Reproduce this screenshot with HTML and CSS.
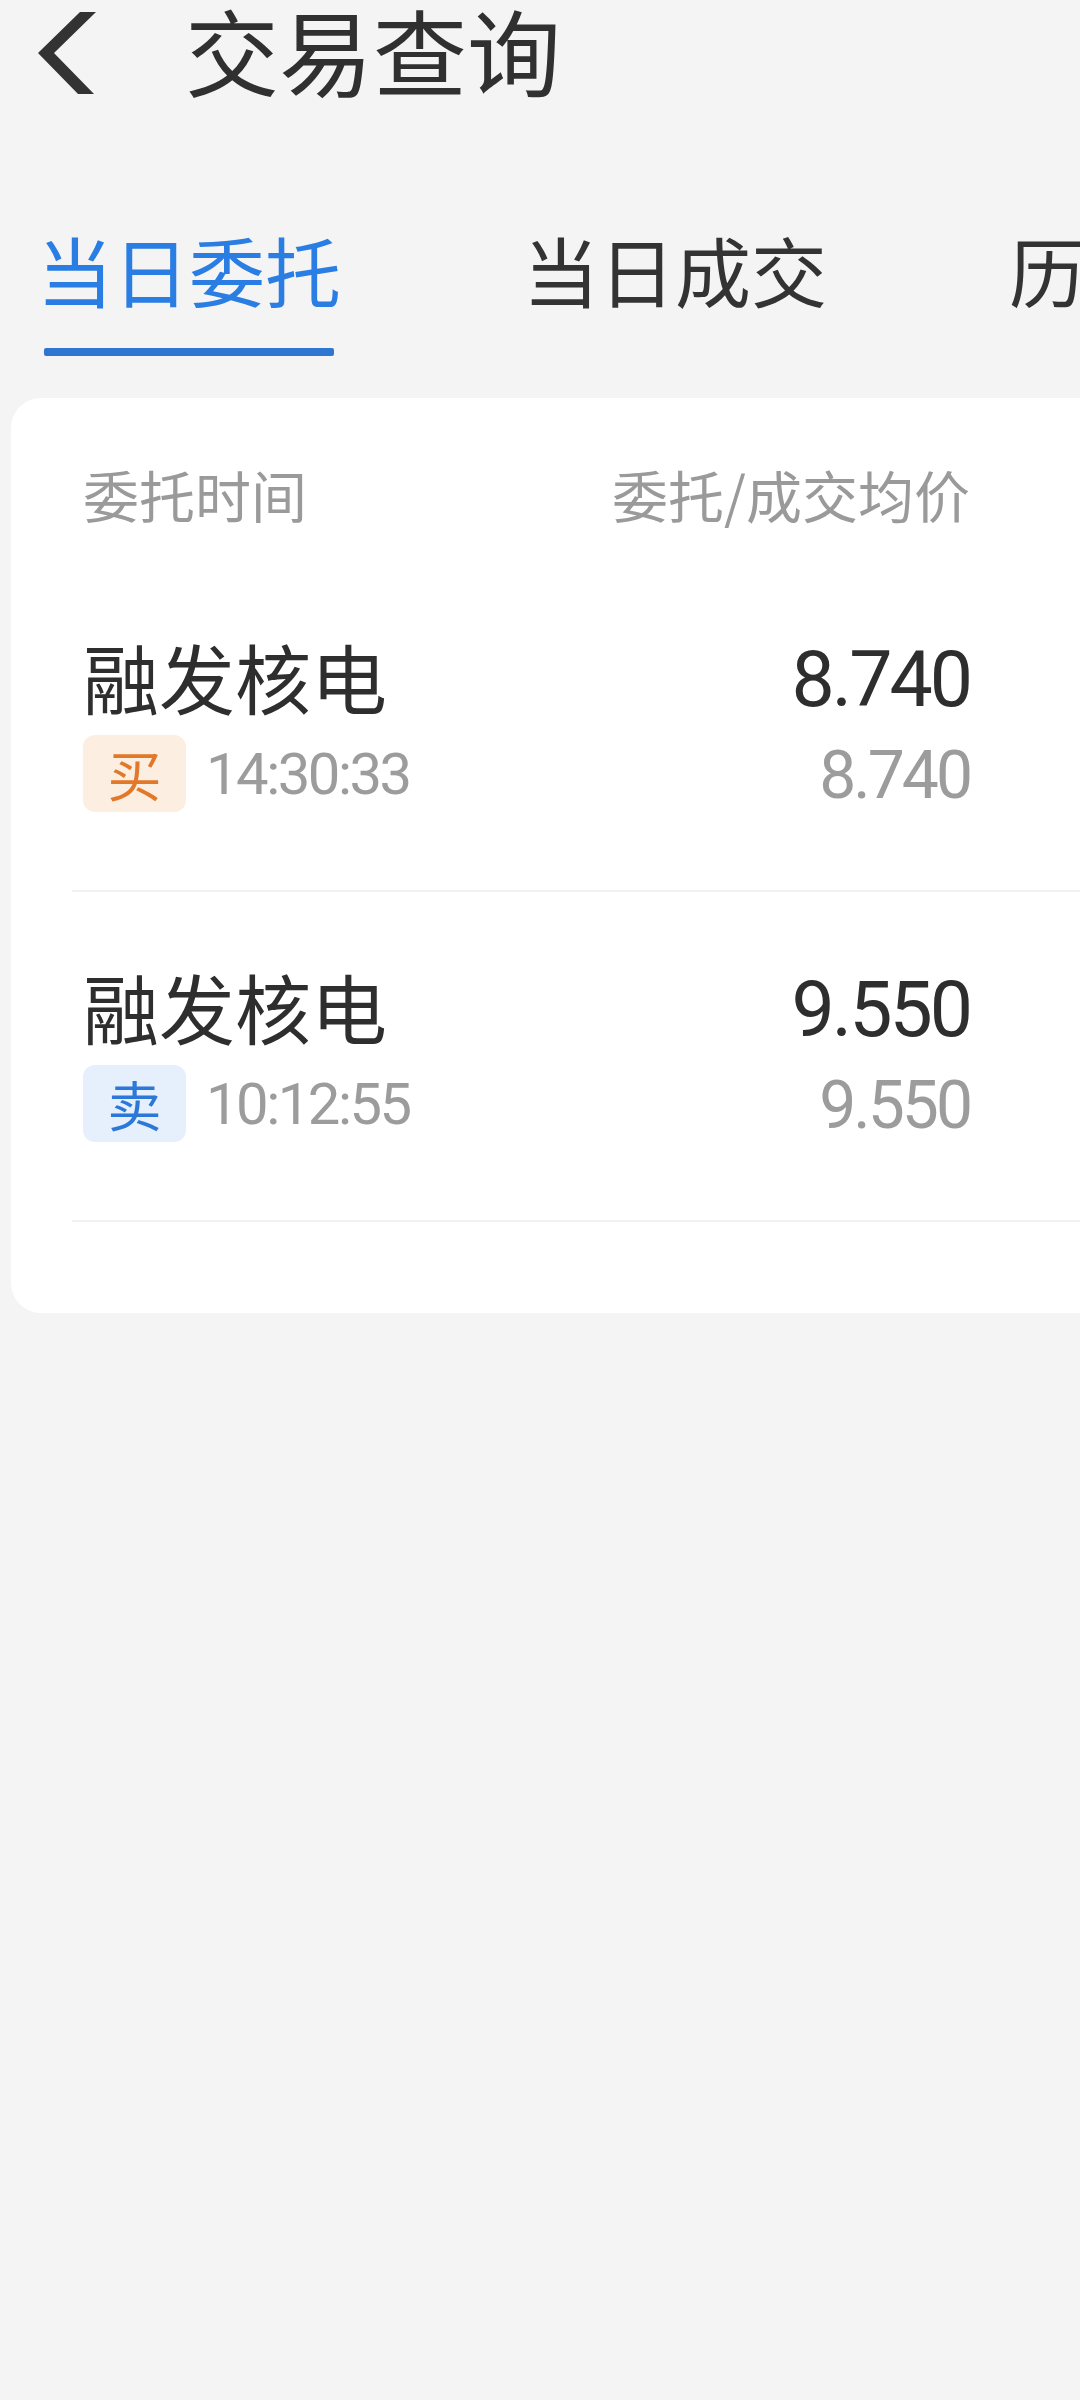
FILE: index.html
```html
<!DOCTYPE html>
<html lang="zh-CN">
<head>
<meta charset="utf-8">
<title>交易查询</title>
<link rel="stylesheet" href="styles.css">
</head>
<body>
<div class="page">
  <header class="topbar">
    <svg class="back" width="100" height="98" viewBox="0 0 100 98" aria-hidden="true">
      <polygon points="80,12 96,12 54,53 94,94 78,94 38,53" fill="#333333"/>
    </svg>
    <h1 class="title">交易查询</h1>
  </header>

  <nav class="tabs">
    <div class="tab active"><span class="tab-text">当日委托</span><span class="tab-line"></span></div>
    <div class="tab"><span class="tab-text">当日成交</span></div>
    <div class="tab"><span class="tab-text">历史委托</span></div>
  </nav>

  <section class="card">
    <div class="thead">
      <div class="cells">
        <span class="th">委托时间</span>
        <span class="th">委托/成交均价</span>
      </div>
    </div>

    <div class="row">
      <div class="cells">
        <div class="col-left">
          <div class="name">融发核电</div>
          <div class="meta">
            <span class="badge buy">买</span>
            <span class="time">14:30:33</span>
          </div>
        </div>
        <div class="col-right">
          <div class="price">8.740</div>
          <div class="price-sub">8.740</div>
        </div>
      </div>
    </div>

    <div class="row">
      <div class="cells">
        <div class="col-left">
          <div class="name">融发核电</div>
          <div class="meta">
            <span class="badge sell">卖</span>
            <span class="time">10:12:55</span>
          </div>
        </div>
        <div class="col-right">
          <div class="price">9.550</div>
          <div class="price-sub">9.550</div>
        </div>
      </div>
    </div>
  </section>
</div>
</body>
</html>
```

FILE: styles.css
```css
html, body {
  margin: 0;
  padding: 0;
}

body {
  width: 1080px;
  height: 2400px;
  overflow: hidden;
  background: #f4f4f4;
  font-family: "Noto Sans CJK SC", "Noto Sans", sans-serif;
  color: #333333;
}

.page {
  width: 1080px;
  overflow: hidden;
  height: 2400px;
}

/* top bar */
.topbar {
  display: flex;
  align-items: center;
  height: 98px;
}

.back {
  flex-shrink: 0;
  display: block;
}

.title {
  margin: 0 0 0 85px;
  font-size: 94px;
  line-height: 1;
  font-weight: 400;
  color: #303030;
  white-space: nowrap;
}

/* tabs */
.tabs {
  display: flex;
  gap: 182px;
  padding: 133px 0 0 37px;
  white-space: nowrap;
}

.tab {
  flex-shrink: 0;
  display: flex;
  flex-direction: column;
  align-items: center;
}

.tab-text {
  font-size: 76px;
  line-height: 76px;
  color: #333333;
}

.tab.active .tab-text {
  color: #2a7de2;
}

.tab-line {
  display: block;
  width: 290px;
  height: 8px;
  margin-top: 41px;
  border-radius: 2px;
  background: #2f76d2;
}

/* card */
.card {
  margin: 42px 0 0 11px;
  width: 1200px;
  background: #ffffff;
  border-radius: 30px;
  padding-bottom: 91px;
}

.cells {
  width: 887px;
  display: flex;
  justify-content: space-between;
}

.thead {
  padding: 68px 0 40px 72px;
}

.th {
  font-size: 56px;
  line-height: 56px;
  color: #9a9a9a;
  white-space: nowrap;
}

.row {
  margin-left: 61px;
  padding-left: 11px;
  border-bottom: 2px solid #f1f1f1;
}

.col-left {
  padding: 76px 0 78px;
}

.name {
  font-size: 76px;
  line-height: 76px;
  color: #2e2e2e;
  white-space: nowrap;
}

.meta {
  display: flex;
  align-items: center;
  margin-top: 21px;
}

.badge {
  width: 103px;
  height: 77px;
  border-radius: 12px;
  font-size: 54px;
  line-height: 77px;
  text-align: center;
}

.badge.buy {
  background: #fdeee2;
  color: #e2782a;
}

.badge.sell {
  background: #e6f0fd;
  color: #2c78d8;
}

.time {
  margin-left: 20px;
  font-family: Roboto, "Noto Sans", sans-serif;
  font-size: 58px;
  line-height: 58px;
  letter-spacing: -2.5px;
  color: #9c9c9c;
}

.col-right {
  padding-top: 80px;
  text-align: right;
  font-family: Roboto, "Noto Sans", sans-serif;
}

.price {
  font-size: 77px;
  line-height: 76px;
  letter-spacing: -3px;
  color: #2e2e2e;
}

.price-sub {
  margin-top: 25px;
  font-size: 66px;
  line-height: 66px;
  letter-spacing: -3px;
  color: #9c9c9c;
}
```
